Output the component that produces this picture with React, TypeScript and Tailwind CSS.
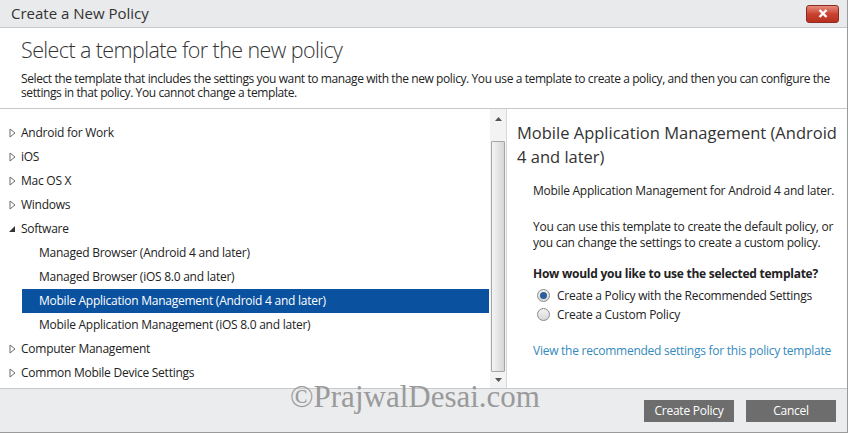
import React from "react";

const font = { fontFamily: '"Open Sans", "Noto Sans", sans-serif' };

function Closed() {
  return (
    <svg width="7" height="10" viewBox="0 0 7 10" className="shrink-0">
      <path d="M1 1 L6 5 L1 9 Z" fill="none" stroke="#6b6b6b" strokeWidth="1" />
    </svg>
  );
}

function Open() {
  return (
    <svg width="7" height="10" viewBox="0 0 7 10" className="shrink-0">
      <path d="M6 2 L6 8 L0 8 Z" fill="#333" />
    </svg>
  );
}

function Row({ label, open, child, selected }: { label: string; open?: boolean; child?: boolean; selected?: boolean }) {
  if (child) {
    return (
      <div
        className={
          "h-[24px] flex items-center ml-[22px] pl-[17px] " +
          (selected ? "bg-[#0a52a0] text-white" : "text-[#222]")
        }
      >
        {label}
      </div>
    );
  }
  return (
    <div className="h-[24px] flex items-center pl-[9px] gap-[5px] text-[#222]">
      {open ? <Open /> : <Closed />}
      <span>{label}</span>
    </div>
  );
}

function Radio({ checked, label }: { checked?: boolean; label: string }) {
  return (
    <div className="flex items-center gap-[7px] h-[19px]">
      <span className="w-[13px] h-[13px] rounded-full border border-[#8a8a8a] bg-gradient-to-b from-[#f2f2f2] to-[#d8d8d8] flex items-center justify-center">
        {checked && <span className="w-[7px] h-[7px] rounded-full bg-[#2b5f9a]" />}
      </span>
      <span>{label}</span>
    </div>
  );
}

export default function App() {
  return (
    <div className="w-[848px] h-[433px] flex flex-col bg-white text-[12px] tracking-[-0.25px] border-r border-b border-[#9a9a9a]" style={font}>
      <div className="h-[28px] shrink-0 bg-[#e9eaec] border-b border-[#c8c9cb] flex items-center justify-between pl-[11px] pr-[8px]">
        <span className="text-[15px] text-[#333] tracking-normal">Create a New Policy</span>
        <div className="w-[33px] h-[18px] rounded-[3px] border border-[#8e2a20] bg-gradient-to-b from-[#e58a7d] via-[#c8432f] to-[#b8301f] flex items-center justify-center">
          <svg width="10" height="9" viewBox="0 0 10 9">
            <path d="M1.5 1 L8.5 8 M8.5 1 L1.5 8" stroke="white" strokeWidth="2.4" />
          </svg>
        </div>
      </div>

      <div className="h-[81px] shrink-0 pl-[21px] pr-[13px] pt-[7px] border-b border-[#c8c9cb]">
        <div className="text-[21.5px] font-light text-[#333] leading-[30px] tracking-[-0.6px]">Select a template for the new policy</div>
        <p className="mt-[7px] leading-[14px] text-[#222] tracking-[-0.4px]">
          Select the template that includes the settings you want to manage with the new policy. You use a template to create a policy, and then you can configure the settings in that policy. You cannot change a template.
        </p>
      </div>

      <div className="flex-1 flex min-h-0">
        <div className="w-[490px] pt-[12px] pr-[1px]">
          <Row label="Android for Work" />
          <Row label="iOS" />
          <Row label="Mac OS X" />
          <Row label="Windows" />
          <Row label="Software" open />
          <Row child label="Managed Browser (Android 4 and later)" />
          <Row child label="Managed Browser (iOS 8.0 and later)" />
          <Row child selected label="Mobile Application Management (Android 4 and later)" />
          <Row child label="Mobile Application Management (iOS 8.0 and later)" />
          <Row label="Computer Management" />
          <Row label="Common Mobile Device Settings" />
        </div>

        <div className="w-[17px] bg-[#f3f3f3] flex flex-col items-center border-r border-[#d8d8d8]">
          <div className="h-[32px] flex items-start pt-[8px]">
            <svg width="7" height="4" viewBox="0 0 7 4">
              <path d="M0 4 L3.5 0 L7 4 Z" fill="#555" />
            </svg>
          </div>
          <div className="flex-1 w-[14px] border border-[#a6a6a6] rounded-[1px] bg-gradient-to-r from-[#f4f4f4] to-[#d6d6d6]" />
          <div className="h-[16px] flex items-center">
            <svg width="7" height="4" viewBox="0 0 7 4">
              <path d="M0 0 L3.5 4 L7 0 Z" fill="#555" />
            </svg>
          </div>
        </div>

        <div className="flex-1 pl-[10px] pr-[8px] pt-[12px] text-[#222]">
          <div className="text-[16.5px] leading-[24px] text-[#333] tracking-normal">Mobile Application Management (Android 4 and later)</div>
          <div className="pl-[16px] mt-[14px]">
            <p className="leading-[16px]">Mobile Application Management for Android 4 and later.</p>
            <p className="leading-[16px] mt-[20px]">
              You can use this template to create the default policy, or you can change the settings to create a custom policy.
            </p>
            <p className="font-bold mt-[15px] leading-[16px]">How would you like to use the selected template?</p>
            <div className="pl-[4px] mt-[4px]">
              <Radio checked label="Create a Policy with the Recommended Settings" />
              <Radio label="Create a Custom Policy" />
            </div>
            <p className="mt-[18px] text-[#3489bd]">View the recommended settings for this policy template</p>
          </div>
        </div>
      </div>

      <div className="h-[44px] shrink-0 bg-[#ebecee] border-t border-[#c8c9cb] flex items-start pl-[290px] pr-[11px]">
        <span className="text-[31px] text-[#9a9a9a] leading-none -mt-[8px] tracking-normal" style={{ fontFamily: '"Liberation Serif", serif' }}>
          ©PrajwalDesai.com
        </span>
        <div className="ml-auto mt-[11px] flex gap-[12px]">
          <button className="w-[90px] h-[22px] bg-[#6d6d6d] text-white text-[12px]">Create Policy</button>
          <button className="w-[90px] h-[22px] bg-[#6d6d6d] text-white text-[12px]">Cancel</button>
        </div>
      </div>
    </div>
  );
}
